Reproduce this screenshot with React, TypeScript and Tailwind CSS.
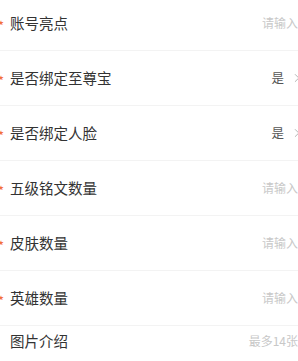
import { ChevronRight } from "lucide-react";

type Row = {
  label: string;
  required?: boolean;
  value?: string;
  select?: boolean;
};

const rows: Row[] = [
  { label: "账号亮点", required: true },
  { label: "是否绑定至尊宝", required: true, value: "是", select: true },
  { label: "是否绑定人脸", required: true, value: "是", select: true },
  { label: "五级铭文数量", required: true },
  { label: "皮肤数量", required: true },
  { label: "英雄数量", required: true },
];

function FormRow({ row }: { row: Row }) {
  return (
    <div className="flex h-[55px] items-center border-b border-[#f3f3f3] pl-[16px] pr-[14px]">
      <div className="relative flex items-center">
        {row.required && (
          <span className="absolute -left-[12px] top-[7px] text-[13px] leading-none text-[#f26b3a]">*</span>
        )}
        <span className="text-[14.5px] text-[#333]">{row.label}</span>
      </div>
      <div className="flex-1" />
      {row.select ? (
        <div className="-mr-[6px] flex items-center gap-[6px]">
          <span className="text-[12.5px] text-[#555]">{row.value}</span>
          <ChevronRight className="h-[14px] w-[14px] text-[#aaa]" strokeWidth={1.5} />
        </div>
      ) : (
        <span className="text-[12px] text-[#c8c8c8]">请输入</span>
      )}
    </div>
  );
}

export default function App() {
  return (
    <div
      className="h-[361px] w-[298px] overflow-hidden bg-white"
      style={{ fontFamily: '"Noto Sans CJK SC", "Noto Sans", sans-serif' }}
    >
      <div className="-ml-[6px] -mt-[4px] w-[318px]">
        {rows.map((r) => (
          <FormRow key={r.label} row={r} />
        ))}
        <div className="flex items-center pl-[16px] pr-[14px] pt-[4px]">
          <span className="text-[14.5px] text-[#333]">图片介绍</span>
          <div className="flex-1" />
          <span className="text-[12px] text-[#c8c8c8]">最多14张</span>
        </div>
      </div>
    </div>
  );
}
